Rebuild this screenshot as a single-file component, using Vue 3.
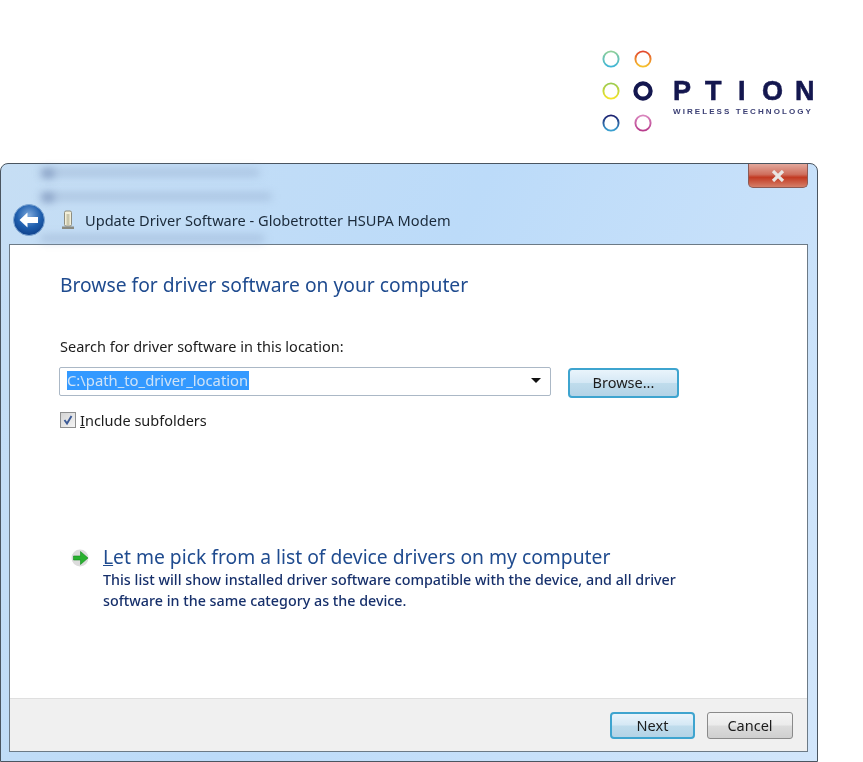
<script setup>
const blurRows = [
  { top: 5, left: 31, width: 220, dark: false },
  { top: 5, left: 33, width: 12, dark: true },
  { top: 29, left: 31, width: 232, dark: false },
  { top: 29, left: 33, width: 12, dark: true },
  { top: 71, left: 31, width: 225, dark: false },
]
</script>

<template>
  <div class="page">
    <header class="logo-bar">
      <svg class="logo" width="230" height="100" viewBox="0 0 230 100">
        <defs>
          <linearGradient id="ringTeal" x1="0" y1="0" x2="0" y2="1">
            <stop offset="0" stop-color="#8fcf9a" />
            <stop offset="1" stop-color="#3fb6d6" />
          </linearGradient>
          <linearGradient id="ringOrange" x1="0" y1="0" x2="0" y2="1">
            <stop offset="0" stop-color="#e2472f" />
            <stop offset="1" stop-color="#f6c22c" />
          </linearGradient>
          <linearGradient id="ringLime" x1="0" y1="0" x2="0" y2="1">
            <stop offset="0" stop-color="#9ccb50" />
            <stop offset="1" stop-color="#f2e32a" />
          </linearGradient>
          <linearGradient id="ringBlue" x1="0" y1="0" x2="0" y2="1">
            <stop offset="0" stop-color="#1c1f6e" />
            <stop offset="1" stop-color="#3aa0d0" />
          </linearGradient>
          <linearGradient id="ringPink" x1="0" y1="0" x2="0" y2="1">
            <stop offset="0" stop-color="#d985bd" />
            <stop offset="1" stop-color="#b83c8c" />
          </linearGradient>
        </defs>
        <circle cx="21" cy="19" r="7.6" fill="none" stroke="url(#ringTeal)" stroke-width="1.9" />
        <circle cx="53" cy="19" r="7.6" fill="none" stroke="url(#ringOrange)" stroke-width="1.9" />
        <circle cx="21" cy="51" r="7.6" fill="none" stroke="url(#ringLime)" stroke-width="1.9" />
        <circle cx="53" cy="51" r="7.6" fill="none" stroke="#14174f" stroke-width="4.2" />
        <circle cx="21" cy="83" r="7.6" fill="none" stroke="url(#ringBlue)" stroke-width="1.9" />
        <circle cx="53" cy="83" r="7.6" fill="none" stroke="url(#ringPink)" stroke-width="1.9" />
        <text class="logo-word" x="83 115 148 172 205" y="60">PTION</text>
        <text class="logo-sub" x="83" y="74">WIRELESS TECHNOLOGY</text>
      </svg>
    </header>

    <section class="window">
      <div class="titlebar">
        <div
          v-for="row in blurRows"
          :key="row.left + '-' + row.top + '-' + row.width"
          class="blur-row"
          :class="{ dark: row.dark }"
          :style="{ top: row.top + 'px', left: row.left + 'px', width: row.width + 'px' }"
        ></div>
        <div class="close-btn">
          <svg width="16" height="12" viewBox="0 0 16 12">
            <path d="M3 1 L13 11 M13 1 L3 11" stroke="#e9e6e3" stroke-width="3.2" fill="none" />
          </svg>
        </div>
        <div class="back-btn">
          <svg width="34" height="34" viewBox="0 0 34 34">
            <defs>
              <radialGradient id="backFill" cx="0.5" cy="0.35" r="0.7">
                <stop offset="0" stop-color="#7ea9dc" />
                <stop offset="0.55" stop-color="#1f5fae" />
                <stop offset="1" stop-color="#0c3c85" />
              </radialGradient>
            </defs>
            <circle cx="17" cy="17" r="15.5" fill="url(#backFill)" stroke="#7fa7d4" stroke-width="1" />
            <path d="M7.5 17 L15.5 9.5 V14 H26 V20 H15.5 V24.5 Z" fill="#fff" />
          </svg>
        </div>
        <svg class="modem-icon" width="14" height="20" viewBox="0 0 14 20">
          <rect x="3.5" y="1" width="7" height="15" rx="1.5" fill="#f3efd8" stroke="#8d8d80" />
          <rect x="5.5" y="4" width="3" height="11" fill="#c9c6ac" />
          <rect x="1" y="16.5" width="12" height="2.5" fill="#8a8a80" />
        </svg>
        <span class="title-text">Update Driver Software - Globetrotter HSUPA Modem</span>
      </div>

      <div class="client">
        <main class="content">
          <h1 class="heading">Browse for driver software on your computer</h1>
          <p class="field-label">Search for driver software in this location:</p>

          <div class="path-row">
            <div class="combo">
              <span class="combo-value">C:\path_to_driver_location</span>
              <span class="combo-arrow"></span>
            </div>
            <div class="btn btn-focus browse">Browse...</div>
          </div>

          <div class="check-row">
            <span class="checkbox">
              <svg width="12" height="12" viewBox="0 0 12 12">
                <path d="M2.5 6 L5 9.5 L9.5 2" stroke="#3c5a96" stroke-width="1.9" fill="none" />
              </svg>
            </span>
            <span class="check-label"><u>I</u>nclude subfolders</span>
          </div>

          <div class="link-row">
            <svg class="link-arrow" width="22" height="20" viewBox="0 0 22 20">
              <circle cx="10" cy="10" r="8.5" fill="#dcdcdc" />
              <path d="M3.5 8 H10.5 V3.5 L18 10 L10.5 16.5 V12 H3.5 Z" fill="#29b12f" stroke="#128a1d" stroke-width="0.6" />
            </svg>
            <div>
              <div class="link-title"><u>L</u>et me pick from a list of device drivers on my computer</div>
              <p class="link-desc">This list will show installed driver software compatible with the device, and all driver<br />software in the same category as the device.</p>
            </div>
          </div>
        </main>

        <footer class="footer">
          <div class="btn btn-focus next">Next</div>
          <div class="btn cancel">Cancel</div>
        </footer>
      </div>
    </section>
  </div>
</template>

<style>
html,
body {
  margin: 0;
  background: #fff;
}
</style>

<style scoped>
.page {
  width: 863px;
  height: 762px;
  overflow: hidden;
  background: #fff;
  font-family: 'Noto Sans', 'Open Sans', sans-serif;
  filter: blur(0.35px);
}

.logo-bar {
  height: 163px;
  display: flex;
  justify-content: flex-end;
  padding: 40px 43px 0 0;
  box-sizing: border-box;
}

.logo {
  display: block;
}

.logo-word {
  font-family: 'Liberation Sans', sans-serif;
  font-weight: 700;
  font-size: 27px;
  fill: #14174f;
  stroke: #14174f;
  stroke-width: 0.6px;
}

.logo-sub {
  font-family: 'Liberation Sans', sans-serif;
  font-weight: 700;
  font-size: 8px;
  letter-spacing: 2.08px;
  fill: #3b3f74;
}

.window {
  width: 818px;
  height: 599px;
  box-sizing: border-box;
  border: 1px solid #4a5560;
  border-radius: 8px 8px 0 0;
  padding: 0 9px 9px 8px;
  background: linear-gradient(115deg, #c6def4 0%, #bcdbf9 45%, #d2e6fb 100%);
  display: flex;
  flex-direction: column;
}

.titlebar {
  position: relative;
  height: 80px;
  flex-shrink: 0;
  display: flex;
  align-items: center;
  padding-top: 31px;
  box-sizing: border-box;
}

.blur-row {
  position: absolute;
  height: 7px;
  border-radius: 4px;
  background: #8fa6c8;
  opacity: 0.5;
  filter: blur(4px);
}

.blur-row.dark {
  height: 9px;
  background: #50689a;
}

.close-btn {
  position: absolute;
  top: 0;
  right: 0;
  width: 60px;
  height: 24px;
  box-sizing: border-box;
  display: flex;
  align-items: center;
  justify-content: center;
  border: 1px solid #8b5a55;
  border-top: 0;
  border-radius: 0 0 5px 5px;
  background: linear-gradient(#e2a89c 0%, #cf6f5d 45%, #c23a22 58%, #d57e68 100%);
}

.back-btn {
  position: relative;
  margin-left: 3px;
  width: 34px;
  height: 34px;
}

.modem-icon {
  position: relative;
  margin-left: 15px;
}

.title-text {
  position: relative;
  margin-left: 10px;
  font-size: 14.6px;
  color: #1b2a3a;
}

.client {
  flex: 1;
  min-height: 0;
  display: flex;
  flex-direction: column;
  background: #fff;
  border: 1px solid #6c7a86;
}

.content {
  flex: 1;
  min-height: 0;
  padding: 27px 0 0 50px;
}

.heading {
  margin: 0;
  font-size: 19.25px;
  font-weight: 400;
  line-height: 26px;
  color: #1f4b8f;
}

.field-label {
  margin: 38px 0 0;
  font-size: 14.5px;
  line-height: 20px;
  color: #1c1c1c;
}

.path-row {
  display: flex;
  align-items: flex-start;
  margin-top: 11px;
  margin-left: -1px;
}

.combo {
  width: 492px;
  height: 29px;
  box-sizing: border-box;
  display: flex;
  align-items: center;
  justify-content: space-between;
  padding: 0 9px 2px 7px;
  border: 1px solid #abb8c6;
  border-radius: 2px;
}

.combo-value {
  background: #3399ff;
  color: #cfe3f7;
  font-size: 14.8px;
  line-height: 19px;
  padding-right: 1px;
}

.combo-arrow {
  width: 0;
  height: 0;
  border-left: 5px solid transparent;
  border-right: 5px solid transparent;
  border-top: 5px solid #111;
}

.btn {
  box-sizing: border-box;
  display: flex;
  align-items: center;
  justify-content: center;
  padding-bottom: 2px;
  font-size: 14.5px;
  color: #1c1c1c;
  border: 1px solid #8a8a8a;
  border-radius: 3px;
  background: linear-gradient(#f4f4f4 0%, #ebebeb 48%, #dcdcdc 52%, #cfcfcf 100%);
}

.btn-focus {
  border: 2px solid #3ea4cf;
  border-radius: 4px;
  background: linear-gradient(#e9f4fb 0%, #d5e8f5 48%, #bfdcec 52%, #b4d3e6 100%);
}

.browse {
  width: 111px;
  height: 30px;
  margin: 1px 0 0 17px;
}

.check-row {
  display: flex;
  align-items: center;
  gap: 4px;
  margin-top: 13px;
  height: 18px;
}

.checkbox {
  width: 16px;
  height: 16px;
  box-sizing: border-box;
  display: flex;
  align-items: center;
  justify-content: center;
  border: 1px solid #8e8f8f;
  background: linear-gradient(135deg, #d4d4d4, #f4f4f4);
}

.check-label {
  font-size: 14.5px;
  line-height: 18px;
  color: #1c1c1c;
}

.link-row {
  display: flex;
  align-items: flex-start;
  gap: 11px;
  margin: 115px 0 0 10px;
}

.link-arrow {
  margin-top: 4px;
}

.link-title {
  font-size: 19.3px;
  line-height: 25px;
  color: #1f4b8f;
}

.link-desc {
  margin: 0;
  font-size: 14.3px;
  font-weight: 500;
  line-height: 21px;
  color: #17306b;
}

.footer {
  height: 53px;
  flex-shrink: 0;
  box-sizing: border-box;
  display: flex;
  justify-content: flex-end;
  align-items: flex-start;
  gap: 12px;
  padding: 13px 14px 0 0;
  background: #f0f0f0;
  border-top: 1px solid #dfdfdf;
}

.next,
.cancel {
  height: 27px;
}

.next {
  width: 85px;
}

.cancel {
  width: 86px;
}
</style>
